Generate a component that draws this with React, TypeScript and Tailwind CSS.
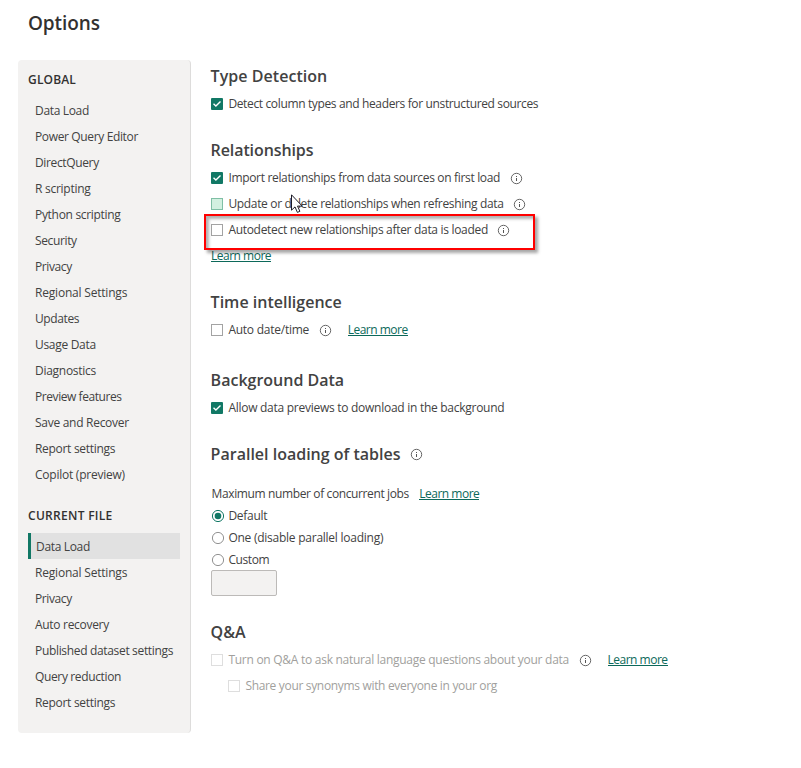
import type { ReactNode } from "react";

const globalItems: [string, string][] = [
  ["Data Load", "tracking-[-0.33px]"],
  ["Power Query Editor", "tracking-[-0.36px]"],
  ["DirectQuery", "tracking-[-0.36px]"],
  ["R scripting", "tracking-[-0.27px]"],
  ["Python scripting", "tracking-[-0.31px]"],
  ["Security", "tracking-[-0.37px]"],
  ["Privacy", "tracking-[-0.4px]"],
  ["Regional Settings", "tracking-[-0.2px]"],
  ["Updates", "tracking-[-0.4px]"],
  ["Usage Data", "tracking-[-0.3px]"],
  ["Diagnostics", "tracking-[-0.28px]"],
  ["Preview features", "tracking-[-0.43px]"],
  ["Save and Recover", "tracking-[-0.28px]"],
  ["Report settings", "tracking-[-0.3px]"],
  ["Copilot (preview)", "tracking-[-0.24px]"],
];

const fileItems: [string, string][] = [
  ["Regional Settings", "tracking-[-0.2px]"],
  ["Privacy", "tracking-[-0.4px]"],
  ["Auto recovery", "tracking-[-0.3px]"],
  ["Published dataset settings", "tracking-[-0.33px]"],
  ["Query reduction", "tracking-[-0.36px]"],
  ["Report settings", "tracking-[-0.3px]"],
];

function NavItem({ label, track }: { label: string; track: string }) {
  return (
    <li className="flex h-[26px] items-center pl-[7px]">
      <span className={track}>{label}</span>
    </li>
  );
}

function Info({ className = "" }: { className?: string }) {
  return (
    <svg width="11" height="11" viewBox="0 0 11 11" className={`mt-px shrink-0 overflow-visible ${className}`} fill="none">
      <circle cx="5.5" cy="5.5" r="5.2" stroke="#555" strokeWidth="0.9" />
      <rect x="5" y="5" width="1" height="3" fill="#555" />
      <rect x="5" y="3" width="1" height="1" fill="#555" />
    </svg>
  );
}

type BoxState = "on" | "off" | "hover" | "disabled";

function Box({ state }: { state: BoxState }) {
  if (state === "on")
    return (
      <svg width="12" height="12" viewBox="0 0 12 12" className="shrink-0" fill="none">
        <rect width="12" height="12" rx="1" fill="#117865" />
        <path d="M2.5 5.8 4.9 8.1 9.5 3.6" stroke="#fff" strokeWidth="1.4" />
      </svg>
    );
  const look = {
    off: "border-[#a3a3a3] bg-white",
    hover: "border-[#7fbfa5] bg-[#d2f0e0]",
    disabled: "border-[#dedede] bg-white",
  }[state];
  return <span className={`size-3 shrink-0 border ${look}`} />;
}

function Row({ state, label, track = "", children, className = "" }: { state: BoxState; label: string; track?: string; children?: ReactNode; className?: string }) {
  return (
    <div className={`flex h-[26px] items-center ${className}`}>
      <Box state={state} />
      <span className={`ml-[5.4px] ${track}`}>{label}</span>
      {children}
    </div>
  );
}

function Radio({ checked = false, label, track = "" }: { checked?: boolean; label: string; track?: string }) {
  return (
    <div className="flex h-[22px] items-center">
      <svg width="14" height="14" viewBox="0 0 14 14" className="shrink-0" fill="none">
        <circle cx="7" cy="7" r="5.6" stroke={checked ? "#117865" : "#929292"} strokeWidth="1" />
        {checked && <circle cx="7" cy="7" r="3.3" fill="#117865" />}
      </svg>
      <span className={`ml-[3.4px] ${track}`}>{label}</span>
    </div>
  );
}

function Link({ className = "" }: { className?: string }) {
  return (
    <a className={`mb-[2px] h-[14px] w-[60px] border-b border-[#0c695a] leading-[16px] tracking-[-0.5px] text-[#0c695a] ${className}`}>Learn more</a>
  );
}

function Heading({ children, className = "" }: { children: ReactNode; className?: string }) {
  return <h2 className={`flex h-[30px] items-center text-[16px] font-semibold text-[#424242] ${className}`}>{children}</h2>;
}

export default function App() {
  return (
    <div className="relative flex h-[768px] w-[801px] flex-col overflow-hidden bg-white font-['Open_Sans','Noto_Sans',sans-serif] text-[12px] leading-[16px] whitespace-nowrap text-[#424242]">
      <h1 className="flex h-[46px] shrink-0 items-center pl-7 text-[19px] font-semibold text-[#323130]">
        <span className="tracking-[-0.1px]">Options</span>
      </h1>
      <div className="flex pt-[14px] pl-[18px]">
        <aside className="h-[673px] w-[173px] shrink-0 rounded-[4px] border-r border-[#dddcdb] bg-[#f3f2f1] px-[10px]">
          <h2 className="flex h-[38px] items-center pt-[2px] font-semibold text-[#323130]"><span className="tracking-[0.17px]">GLOBAL</span></h2>
          <ul>
            {globalItems.map(([label, track]) => <NavItem key={label} label={label} track={track} />)}
          </ul>
          <h2 className="mt-[9px] flex h-[36px] items-center pt-[2px] font-semibold text-[#323130]"><span className="tracking-[0.29px]">CURRENT FILE</span></h2>
          <ul>
            <li className="flex h-[26px] w-[152px] items-center border-l-[3px] border-[#117865] bg-[#e1e1e1] pt-[2px] pl-[5px]"><span className="tracking-[-0.33px]">Data Load</span></li>
            <li>
              <ul className="pt-px">
                {fileItems.map(([label, track]) => <NavItem key={label} label={label} track={track} />)}
              </ul>
            </li>
          </ul>
        </aside>
        <main className="pt-px pl-5">
          <Heading><span className="-ml-[0.4px] tracking-[0.04px]">Type Detection</span></Heading>
          <Row state="on" label="Detect column types and headers for unstructured sources" track="tracking-[-0.36px]" />

          <Heading className="mt-[18px]"><span className="-ml-[0.4px] tracking-[-0.1px]">Relationships</span></Heading>
          <Row state="on" label="Import relationships from data sources on first load" track="tracking-[-0.33px]"><Info className="ml-[11px]" /></Row>
          <Row state="hover" label="Update or delete relationships when refreshing data" track="tracking-[-0.335px]"><Info className="ml-[10.7px]" /></Row>
          <Row state="off" label="Autodetect new relationships after data is loaded" track="tracking-[-0.31px]"><Info className="ml-[10.5px]" /></Row>
          <div className="flex h-[26px] items-center"><Link /></div>

          <Heading className="mt-[18px]"><span className="-ml-[0.4px]">Time intelligence</span></Heading>
          <Row state="off" label="Auto date/time" track="tracking-[-0.25px]"><Info className="ml-[10.6px]" /><Link className="ml-[17px]" /></Row>

          <Heading className="mt-[22px]"><span className="-ml-[0.4px]">Background Data</span></Heading>
          <Row state="on" label="Allow data previews to download in the background" track="tracking-[-0.27px]" />

          <Heading className="mt-[18px]"><span className="-ml-[0.4px]">Parallel loading of tables</span><Info className="ml-[10.4px]" /></Heading>
          <div className="mt-[14px] flex h-[22px] items-center pl-[0.6px]"><span className="tracking-[-0.38px]">Maximum number of concurrent jobs</span><Link className="ml-[10.4px]" /></div>
          <Radio checked label="Default" track="tracking-[-0.29px]" />
          <Radio label="One (disable parallel loading)" track="tracking-[-0.25px]" />
          <Radio label="Custom" track="tracking-[-0.4px]" />
          <div className="-mt-px h-[26px] w-[66px] rounded-[2px] border border-[#bcbab8] bg-[#f3f2f1]" />

          <Heading className="mt-[21px]"><span className="-ml-[0.4px]">Q&amp;A</span></Heading>
          <Row state="disabled" className="text-[#a19f9d]" label="Turn on Q&A to ask natural language questions about your data" track="tracking-[-0.27px]"><Info className="ml-[10.6px]" /><Link className="ml-[17px]" /></Row>
          <Row state="disabled" className="pl-[17px] text-[#a19f9d]" label="Share your synonyms with everyone in your org" track="tracking-[-0.325px]" />
        </main>
      </div>
      <div className="absolute top-[214px] left-[204px] h-[36px] w-[331px] border-2 border-[#ff0000] shadow-[3px_3px_3px_rgba(0,0,0,0.35),inset_3px_3px_3px_rgba(0,0,0,0.3)]" />
      <svg className="absolute top-[194px] left-[291px]" width="12" height="20" viewBox="0 0 12 20">
        <path d="M.5.8v15.4l3.5-3.3 2.4 5.5 2.5-1.1-2.4-5.2h4.7Z" fill="#fff" stroke="#1c1c28" strokeWidth="1" />
      </svg>
    </div>
  );
}
